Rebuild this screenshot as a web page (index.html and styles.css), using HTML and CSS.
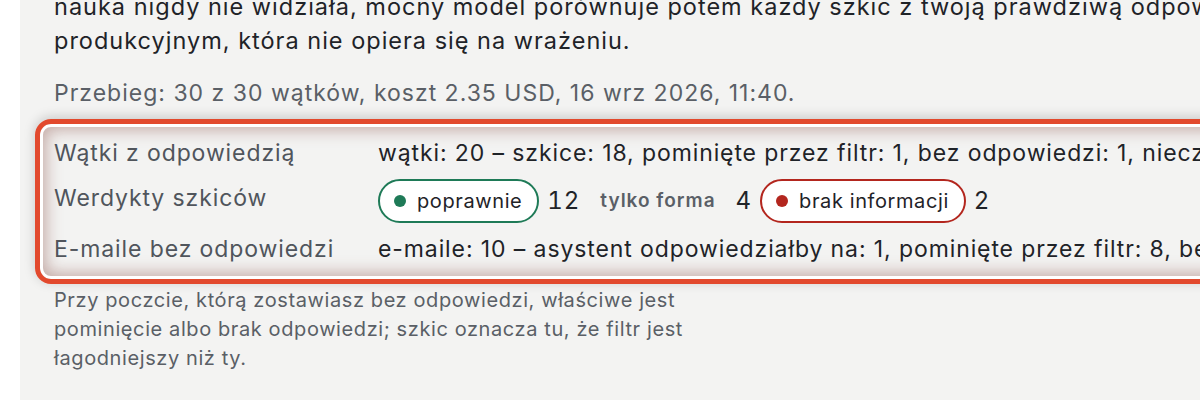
FILE: index.html
```html
<!DOCTYPE html>
<html lang="pl">
<head>
  <meta charset="UTF-8" />
  <meta name="viewport" content="width=device-width, initial-scale=1.0"/>
  <title>Przebieg oceny szkiców</title>
  <link rel="stylesheet" href="styles.css">
</head>

<body>
  <main class="page">
    <!-- Opis metody -->
    <p class="intro">nauka nigdy nie widziała, mocny model porównuje potem każdy szkic z twoją prawdziwą odpowiedzią<br>produkcyjnym, która nie opiera się na wrażeniu.</p>

    <p class="run-meta">Przebieg: 30 z 30 wątków, koszt 2.35 USD, 16 wrz 2026, 11:40.</p>

    <!-- Podsumowanie przebiegu -->
    <div class="summary">
      <div class="summary-row">
        <span class="summary-label">Wątki z odpowiedzią</span>
        <span class="summary-value">wątki: 20 – szkice: 18, pominięte przez filtr: 1, bez odpowiedzi: 1, nieczytelne: 0</span>
      </div>
      <div class="summary-row summary-row-chips">
        <span class="summary-label">Werdykty szkiców</span>
        <span class="summary-value chips">
          <span class="chip chip-ok"><i class="dot"></i>poprawnie</span>
          <span class="count">12</span>
          <span class="chip chip-plain">tylko forma</span>
          <span class="count">4</span>
          <span class="chip chip-bad"><i class="dot"></i>brak informacji</span>
          <span class="count">2</span>
        </span>
      </div>
      <div class="summary-row">
        <span class="summary-label">E-maile bez odpowiedzi</span>
        <span class="summary-value">e-maile: 10 – asystent odpowiedziałby na: 1, pominięte przez filtr: 8, bez odpowiedzi: 1</span>
      </div>
    </div>

    <p class="note">Przy poczcie, którą zostawiasz bez odpowiedzi, właściwe jest pominięcie albo brak odpowiedzi; szkic oznacza tu, że filtr jest łagodniejszy niż ty.</p>
  </main>
</body>
</html>
```

FILE: styles.css
```css
/* Podstawy strony */
html, body {
  margin: 0;
  padding: 0;
  height: 100%;
  background: #fff;
  overflow: hidden;
}

body {
  font-family: Inter, "Noto Sans", sans-serif;
  color: #1f2328;
}

/* Szara kolumna treści */
.page {
  display: flow-root;
  margin-left: 20px;
  width: 1600px;
  height: 100%;
  background: #f3f3f2;
  padding: 0 0 0 34px;
}

.intro {
  margin: -10px 0 0;
  font-size: 23.5px;
  letter-spacing: 1px;
  line-height: 34px;
  white-space: nowrap;
}

.run-meta {
  margin: 20px 0 0;
  font-size: 23px;
  letter-spacing: 1px;
  line-height: 30px;
  color: #5a5f66;
}

/* Ramka z podsumowaniem */
.summary {
  margin: 11px 0 0 -19px;
  width: 1400px;
  padding: 14px 0 15px 14px;
  border: 5px solid #e2492d;
  border-radius: 16px;
  box-shadow:
    inset 0 0 0 3px #fff,
    inset 0 0 16px 6px rgba(130, 70, 60, 0.42),
    0 -2px 12px rgba(0, 0, 0, 0.18);
  display: flex;
  flex-direction: column;
  gap: 8px;
}

.summary-row {
  display: grid;
  grid-template-columns: 324px 1fr;
  align-items: center;
  min-height: 30px;
  font-size: 23px;
  letter-spacing: 0.9px;
  line-height: 30px;
  white-space: nowrap;
}

.summary-row-chips {
  min-height: 50px;
}

.summary-row-chips .summary-label {
  margin-top: -6px;
}

.summary-label {
  color: #50555c;
}

/* Znaczniki werdyktów */
.chips {
  display: flex;
  align-items: center;
  gap: 8px;
}

.chip {
  display: inline-flex;
  align-items: center;
  gap: 11px;
  height: 44px;
  box-sizing: border-box;
  padding: 0 15px 0 14px;
  border-radius: 22px;
  font-size: 20px;
  letter-spacing: 0.6px;
  color: #1f2328;
}

.chip .dot {
  width: 12px;
  height: 12px;
  border-radius: 50%;
}

.chip-ok {
  background: #fff;
  border: 2px solid #1e7a57;
}
.chip-ok .dot { background: #1e7a57; }

.chip-bad {
  background: #fff;
  border: 2px solid #b3261e;
}
.chip-bad .dot { background: #b3261e; }

.chip-plain {
  padding: 0 12px;
  font-size: 19px;
  letter-spacing: 1px;
  font-weight: 600;
  color: #5a5f67;
}

.count {
  font-size: 24px;
  font-variant-numeric: tabular-nums;
}

/* Przypis pod ramką */
.note {
  margin: 2px 0 0;
  width: 680px;
  font-size: 20px;
  letter-spacing: 0.6px;
  line-height: 29px;
  color: #5a5f66;
}
```
